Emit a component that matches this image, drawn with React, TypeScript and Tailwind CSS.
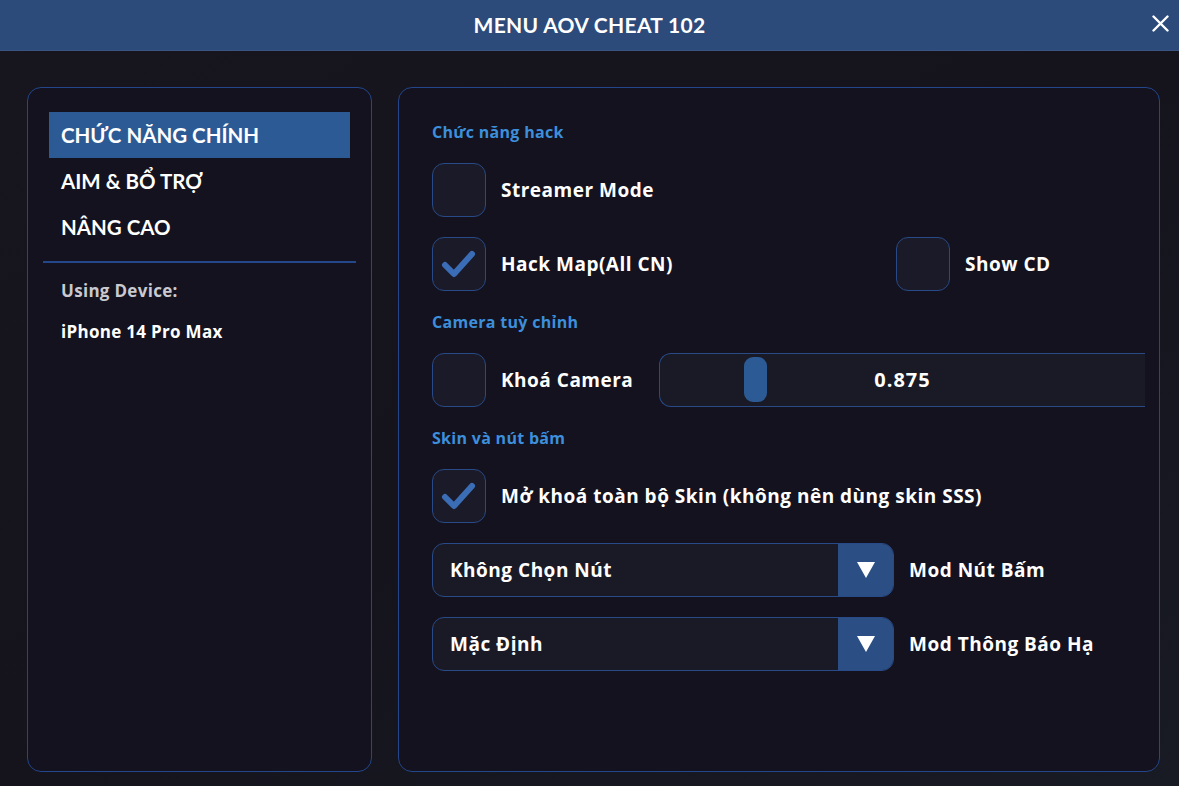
import React from "react";

const font = { fontFamily: "'Open Sans', Lato, 'Noto Sans', sans-serif" };
const caps = { fontFamily: "Lato, 'Open Sans', sans-serif" };

function Box({ checked }: { checked?: boolean }) {
  return (
    <div className="w-[54px] h-[54px] shrink-0 rounded-[12px] border-[1.5px] border-[#284a86] bg-[#1b1a28] flex items-center justify-center">
      {checked && (
        <svg width="40" height="40" viewBox="0 0 40 40">
          <path d="M6 21 L15 30 L33 10" fill="none" stroke="#3a6db5" strokeWidth="6" strokeLinecap="round" strokeLinejoin="round" />
        </svg>
      )}
    </div>
  );
}

function Check({ label, checked }: { label: string; checked?: boolean }) {
  return (
    <div className="flex items-center gap-[15px]">
      <Box checked={checked} />
      <span className="text-white text-[19px] tracking-[0.5px] font-bold">{label}</span>
    </div>
  );
}

function Title({ children }: { children: React.ReactNode }) {
  return <div className="h-[22px] leading-[22px] text-[16px] tracking-[0.3px] font-bold text-[#3d8fdc]">{children}</div>;
}

function Dropdown({ value, label }: { value: string; label: string }) {
  return (
    <div className="flex items-center gap-[15px]">
      <div className="w-[462px] h-[54px] rounded-[12px] border-[1.5px] border-[#284a86] bg-[#1a1a27] flex overflow-hidden">
        <div className="flex-1 flex items-center pl-[17px] text-white text-[19px] tracking-[0.5px] font-bold">{value}</div>
        <div className="w-[55px] bg-[#2b4f85] flex items-center justify-center">
          <svg width="20" height="18" viewBox="0 0 20 18">
            <path d="M1 1 H19 L10 17 Z" fill="white" />
          </svg>
        </div>
      </div>
      <span className="text-white text-[19px] tracking-[0.5px] font-bold">{label}</span>
    </div>
  );
}

export default function App() {
  return (
    <div style={font} className="w-[1179px] h-[786px] overflow-hidden bg-[#16161f] flex flex-col">
      <div className="h-[51px] shrink-0 bg-[#2c4a7a] border-b border-[#3a5584] relative flex items-center justify-center">
        <span style={caps} className="text-white text-[21px] font-bold tracking-[0.3px]">MENU AOV CHEAT 102</span>
        <svg className="absolute right-[10px] top-[15px]" width="17" height="17" viewBox="0 0 17 17">
          <path d="M1.5 1.5 L15.5 15.5 M15.5 1.5 L1.5 15.5" stroke="white" strokeWidth="2.4" strokeLinecap="round" />
        </svg>
      </div>
      <div className="flex-1 flex gap-[26px] pt-[36px] pb-[14px] pl-[27px] pr-[19px] bg-gradient-to-br from-[#17161f] via-[#15141d] to-[#181a24]">
        <div className="w-[345px] shrink-0 rounded-[14px] border-[1.5px] border-[#24468a] bg-[#13121e] flex flex-col pt-[24px]">
          <div style={caps} className="px-[21px] flex flex-col">
            <div className="h-[46px] bg-[#2c5a94] flex items-center pl-[12px] text-white text-[20.5px] font-bold">CHỨC NĂNG CHÍNH</div>
            <div className="h-[46px] flex items-center pl-[12px] text-white text-[20.5px] font-bold">AIM &amp; BỔ TRỢ</div>
            <div className="h-[46px] flex items-center pl-[12px] text-white text-[20.5px] font-bold">NÂNG CAO</div>
          </div>
          <div className="mx-[15px] mt-[11px] h-[1.5px] bg-[#24468a]" />
          <div className="pl-[33px] mt-[16px] h-[24px] leading-[24px] text-[17px] tracking-[0.3px] font-bold text-[#c9c9cf]">Using Device:</div>
          <div className="pl-[33px] mt-[17px] h-[24px] leading-[24px] text-[17px] tracking-[0.3px] font-bold text-white">iPhone 14 Pro Max</div>
        </div>
        <div className="flex-1 rounded-[14px] border-[1.5px] border-[#24468a] bg-[#13121e] pt-[33px] pl-[33px] pr-[14px] flex flex-col gap-[20px]">
          <Title>Chức năng hack</Title>
          <Check label="Streamer Mode" />
          <div className="flex items-center">
            <div className="w-[464px]"><Check label="Hack Map(All CN)" checked /></div>
            <Check label="Show CD" />
          </div>
          <Title>Camera tuỳ chỉnh</Title>
          <div className="flex items-center">
            <div className="w-[227px]"><Check label="Khoá Camera" /></div>
            <div className="flex-1 h-[54px] rounded-l-[12px] border-[1.5px] border-r-0 border-[#284a86] bg-[#1a1a27] relative flex items-center justify-center">
              <div className="absolute left-[84px] top-[3px] w-[23px] h-[45px] rounded-[9px] bg-[#2c5a95]" />
              <span className="text-white text-[20px] tracking-[1px] font-bold">0.875</span>
            </div>
          </div>
          <Title>Skin và nút bấm</Title>
          <Check label="Mở khoá toàn bộ Skin (không nên dùng skin SSS)" checked />
          <Dropdown value="Không Chọn Nút" label="Mod Nút Bấm" />
          <Dropdown value="Mặc Định" label="Mod Thông Báo Hạ" />
        </div>
      </div>
    </div>
  );
}
